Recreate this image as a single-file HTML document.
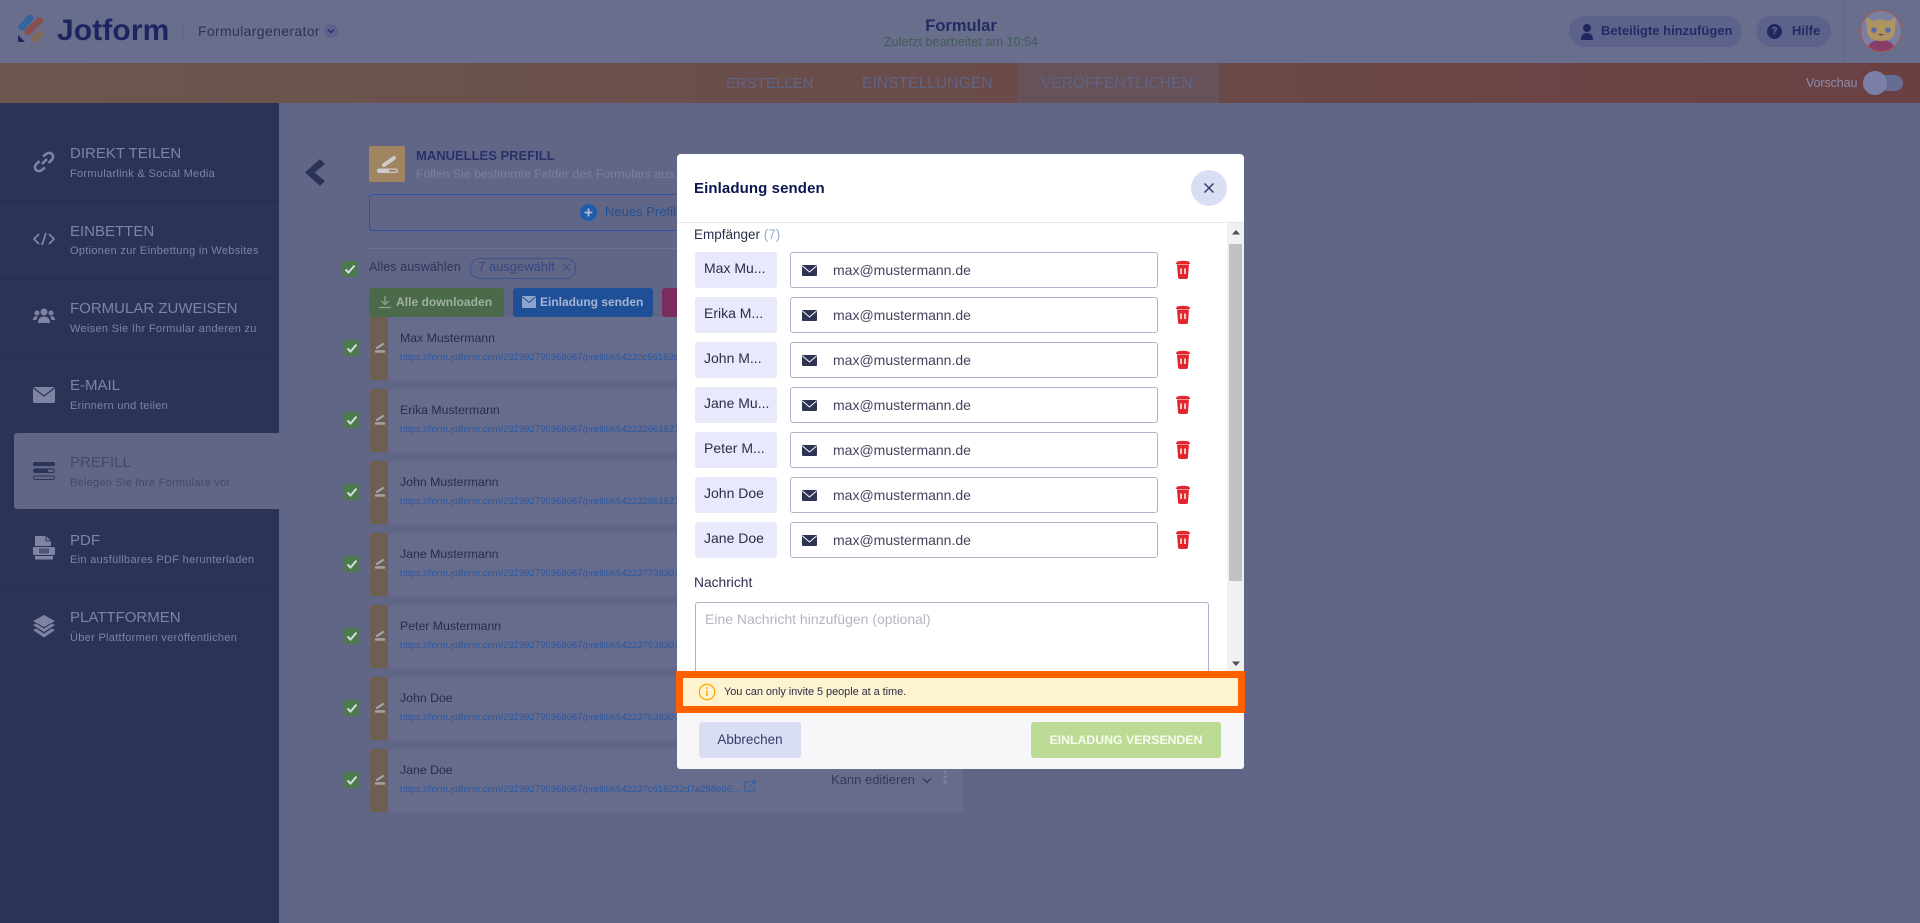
<!DOCTYPE html>
<html lang="de"><head><meta charset="utf-8"><title>Formular</title>
<style>
html,body{margin:0;padding:0}
body{width:1920px;height:923px;overflow:hidden;position:relative;background:#626686;font-family:"Liberation Sans",sans-serif}
div,span.a,svg{position:absolute}
.t{position:absolute;white-space:nowrap;line-height:20px;height:20px}
.st{color:#7f84a3;font-size:15px;letter-spacing:0;left:70px}
.ss{color:#7f84a3;font-size:11px;letter-spacing:.3px;left:70px}
.dv{left:0;width:279px;height:1px;background:#262e50}
.row{left:370px;width:593px;height:63px;background:#686c8c;border-radius:2px}
.acc{left:370px;width:18px;height:63px;background:#6f5f52;border-radius:2px}
.cb{left:344px;width:16px;height:16px;background:#4a7a4e;border-radius:3px}
.nm{left:400px;font-size:12.3px;color:#272c4e}
.lk{left:400px;font-size:9.4px;letter-spacing:.08px;color:#2358a8;width:343px;overflow:hidden}
.chip{left:695px;width:82px;height:36px;background:#e8e9fb;border-radius:3px}
.cht{left:704px;font-size:14px;color:#2b2e4a}
.inp{left:790px;width:366px;height:34px;background:#fff;border:1px solid #b3b2ca;border-radius:3px}
.em{left:833px;font-size:14px;color:#45445f}
</style></head><body>

<!-- header -->
<div style="left:0;top:0;width:1920px;height:63px;background:#6a6e8d"></div>
<svg style="left:0;top:0" width="60" height="60" viewBox="0 0 60 60">
<line x1="22" y1="27" x2="30" y2="18" stroke="#33649f" stroke-width="7" stroke-linecap="round"/>
<line x1="27.500" y1="32" x2="39.500" y2="20.500" stroke="#87504f" stroke-width="7" stroke-linecap="round"/>
<line x1="34.500" y1="39" x2="40" y2="34" stroke="#836a56" stroke-width="7" stroke-linecap="round"/>
<path d="M18 35 L25 42 H19 Q18 42 18 41Z" fill="#1c2560"/>
</svg>
<div class="t" style="left:57px;top:14px;font-size:30px;font-weight:700;color:#1c2560;line-height:34px;height:34px;letter-spacing:.1px">Jotform</div>
<div style="left:183px;top:22px;width:1px;height:19px;background:#62668a"></div>
<div class="t" style="left:198px;top:21px;font-size:14px;color:#2c3258;letter-spacing:.35px">Formulargenerator</div>
<div style="left:324px;top:24px;width:14px;height:14px;border-radius:50%;background:#5d628c"></div>
<svg style="left:324px;top:24px" width="14" height="14"><path d="M4 5.500 L7 8.500 L10 5.500" fill="none" stroke="#232b63" stroke-width="1.300"/></svg>
<div class="t" style="left:900px;width:122px;text-align:center;top:16px;font-size:16.5px;font-weight:700;color:#222b63">Formular</div>
<div class="t" style="left:860px;width:202px;text-align:center;top:32px;font-size:12.700px;color:#3f5e58">Zuletzt bearbeitet am 10:54</div>

<div style="left:1569px;top:16px;width:173px;height:31px;border-radius:16px;background:#5d628a"></div>
<svg style="left:1579px;top:23px" width="16" height="18" viewBox="0 0 16 18"><circle cx="8" cy="5" r="4" fill="#1f2860"/><path d="M2 17 Q2 10 8 10 Q14 10 14 17Z" fill="#1f2860"/></svg>
<div class="t" style="left:1601px;top:21px;font-size:13px;font-weight:700;color:#232b63">Beteiligte hinzufügen</div>
<div style="left:1756px;top:16px;width:75px;height:31px;border-radius:16px;background:#5d628a"></div>
<div style="left:1767px;top:24px;width:15px;height:15px;border-radius:50%;background:#1f2860"></div>
<div class="t" style="left:1767px;width:15px;text-align:center;top:21.500px;font-size:10px;font-weight:700;color:#6a6e8d">?</div>
<div class="t" style="left:1792px;top:21px;font-size:13px;font-weight:700;color:#232b63">Hilfe</div>
<div style="left:1844px;top:0;width:1px;height:63px;background:#62668a"></div>
<svg style="left:1858px;top:8px" width="46" height="46" viewBox="0 0 46 46">
<defs><clipPath id="av"><circle cx="23" cy="23" r="20.500"/></clipPath></defs>
<circle cx="23" cy="23" r="20.500" fill="#7b80a3"/>
<g clip-path="url(#av)">
<path d="M8 46 Q9 32 23 32 Q37 32 38 46Z" fill="#8b3d69"/>
<path d="M8 9 L15 13 Q23 10 31 13 L38 9 L37 20 Q38 33 23 33 Q8 33 9 20Z" fill="#ad9460"/>
<circle cx="16" cy="22" r="2.800" fill="#5a6ca3"/><circle cx="30" cy="22" r="2.800" fill="#5a6ca3"/>
<path d="M20 26 Q23 29 26 26" fill="#6b3a4f"/>
</g>
<circle cx="23" cy="23" r="20.500" fill="none" stroke="#a4584f" stroke-width="1"/>
</svg>

<!-- nav band -->
<div style="left:0;top:63px;width:1920px;height:40px;background:linear-gradient(90deg,#6b5750,#6a4043)"></div>
<div style="left:1017px;top:63px;width:202px;height:40px;background:#665258"></div>
<div class="t" style="left:726px;top:74px;font-size:15px;color:#5f6486;letter-spacing:0">ERSTELLEN</div>
<div class="t" style="left:862px;top:74px;font-size:15.500px;color:#5f6486;letter-spacing:.1px">EINSTELLUNGEN</div>
<div class="t" style="left:1041px;top:74px;font-size:15.500px;color:#5f6486;letter-spacing:.05px">VERÖFFENTLICHEN</div>
<div class="t" style="left:1806px;top:73px;font-size:12.500px;color:#8a8cac;letter-spacing:-.1px">Vorschau</div>
<div style="left:1863px;top:75px;width:40px;height:16px;border-radius:8px;background:#666c92"></div>
<div style="left:1863px;top:71px;width:24px;height:24px;border-radius:50%;background:#7c80a8"></div>

<!-- sidebar -->
<div style="left:0;top:103px;width:279px;height:820px;background:#2b3357"></div>
<div style="left:14px;top:433px;width:265px;height:76px;background:#626686;border-radius:3px 0 0 3px"></div>
<div class="dv" style="top:200px"></div><div class="dv" style="top:278px"></div><div class="dv" style="top:355px"></div><div class="dv" style="top:587px"></div>

<div class="t st" style="top:144px">DIREKT TEILEN</div><div class="t ss" style="top:164px">Formularlink &amp; Social Media</div>
<div class="t st" style="top:222px">EINBETTEN</div><div class="t ss" style="top:241px">Optionen zur Einbettung in Websites</div>
<div class="t st" style="top:299px">FORMULAR ZUWEISEN</div><div class="t ss" style="top:319px">Weisen Sie Ihr Formular anderen zu</div>
<div class="t st" style="top:376px">E-MAIL</div><div class="t ss" style="top:396px">Erinnern und teilen</div>
<div class="t st" style="top:453px;color:#434868">PREFILL</div><div class="t ss" style="top:473px;color:#434868;letter-spacing:.25px">Belegen Sie Ihre Formulare vor</div>
<div class="t st" style="top:531px">PDF</div><div class="t ss" style="top:550px">Ein ausfüllbares PDF herunterladen</div>
<div class="t st" style="top:608px">PLATTFORMEN</div><div class="t ss" style="top:628px">Über Plattformen veröffentlichen</div>

<svg style="left:33px;top:151px" width="22" height="22" viewBox="0 0 22 22" fill="none" stroke="#7f84a3" stroke-width="2.500"><path d="M9 13 L14 8"/><path d="M10 5.500 L13.500 2.800 Q16.500 0.800 19 3 Q21.200 5.500 19 8.500 L15.500 12"/><path d="M12 16.500 L8.500 19.200 Q5.500 21.200 3 19 Q0.800 16.500 3 13.500 L6.500 10"/></svg>
<svg style="left:33px;top:232px" width="22" height="14" viewBox="0 0 22 14" fill="none" stroke="#7f84a3" stroke-width="1.800"><path d="M6 2 L1 7 L6 12"/><path d="M16 2 L21 7 L16 12"/><path d="M13 1 L9 13"/></svg>
<svg style="left:33px;top:308px" width="22" height="16" viewBox="0 0 22 16" fill="#7f84a3"><circle cx="11" cy="4" r="3.500"/><circle cx="4" cy="5" r="2.500"/><circle cx="18" cy="5" r="2.500"/><path d="M5 15 Q5 8.500 11 8.500 Q17 8.500 17 15Z"/><path d="M0 12 Q0 8 4 8 L5 8 Q3.500 10 3.500 12Z"/><path d="M22 12 Q22 8 18 8 L17 8 Q18.500 10 18.500 12Z"/></svg>
<svg style="left:33px;top:387px" width="22" height="16" viewBox="0 0 22 16"><rect width="22" height="16" rx="1.500" fill="#7f84a3"/><path d="M0.500 1 L11 9 L21.500 1" fill="none" stroke="#2b3357" stroke-width="1.200"/></svg>
<svg style="left:33px;top:461px" width="22" height="20" viewBox="0 0 22 20"><rect x="0" y="1" width="22" height="4" rx="2" fill="#2b3357"/><rect x="0.500" y="8" width="21" height="3.500" rx="1.700" fill="none" stroke="#2b3357"/><rect x="1" y="8.500" width="14" height="3" fill="#2b3357"/><rect x="0.500" y="15" width="21" height="3.500" rx="1.700" fill="none" stroke="#2b3357"/></svg>
<svg style="left:33px;top:536px" width="22" height="24" viewBox="0 0 22 24"><path d="M2 0 H13 L18 5 V10 H2Z" fill="#7f84a3"/><path d="M13 0 V5 H18" fill="none" stroke="#2b3357"/><rect x="0" y="11" width="22" height="8" rx="1" fill="#7f84a3"/><rect x="2" y="20" width="18" height="3.500" fill="#7f84a3"/><rect x="6" y="12.500" width="10" height="5" fill="#2b3357" opacity=".6"/></svg>
<svg style="left:33px;top:615px" width="22" height="23" viewBox="0 0 22 23" fill="#7f84a3"><path d="M11 0 L22 6 L11 12 L0 6Z"/><path d="M0 10 L3 8.500 L11 13.500 L19 8.500 L22 10 L11 17Z"/><path d="M0 15 L3 13.500 L11 18.500 L19 13.500 L22 15 L11 22.500Z"/></svg>

<!-- back chevron -->
<svg style="left:304px;top:158px" width="22" height="29" viewBox="0 0 22 29"><path d="M16 1 L21 6 L10.500 14.500 L21 23 L16 28 L1 14.500Z" fill="#2b3357"/></svg>

<!-- manual prefill -->
<div style="left:369px;top:146px;width:36px;height:36px;background:#a08660;border-radius:2px"></div>
<svg style="left:369px;top:146px" width="36" height="36" viewBox="0 0 36 36"><line x1="15" y1="19" x2="25" y2="12" stroke="#cfcad0" stroke-width="4" stroke-linecap="round"/><rect x="8" y="22.500" width="21" height="4.500" rx="2.200" fill="#cfcad0"/><rect x="20" y="23.700" width="7.500" height="2" fill="#a08660"/></svg>
<div class="t" style="left:416px;top:146px;font-size:13px;font-weight:700;color:#2a3168">MANUELLES PREFILL</div>
<div class="t" style="left:416px;top:164px;font-size:12.300px;color:#7c80a0">Füllen Sie bestimmte Felder des Formulars aus,</div>
<div style="left:369px;top:194px;width:600px;height:35px;border:1px solid #2a55a0;border-radius:4px"></div>
<div style="left:580px;top:204px;width:17px;height:17px;border-radius:50%;background:#1e5cac"></div>
<svg style="left:580px;top:204px" width="17" height="17"><path d="M8.500 4.500 V12.500 M4.500 8.500 H12.500" stroke="#b4bfd6" stroke-width="1.800"/></svg>
<div class="t" style="left:605px;top:202px;font-size:13px;color:#24508f">Neues Prefill</div>
<div style="left:369px;top:248px;width:600px;height:1px;background:#6f7391"></div>

<div class="cb" style="left:342px;top:261px"></div>
<svg style="left:342px;top:261px" width="16" height="16"><path d="M3.500 8.500 L6.500 11.500 L12.500 4.500" fill="none" stroke="#d5dbe0" stroke-width="2"/></svg>
<div class="t" style="left:369px;top:257px;font-size:12.500px;color:#2e3358;letter-spacing:.1px">Alles auswählen</div>
<div style="left:470px;top:258px;width:104px;height:19px;border:1px solid #3d5490;border-radius:10px"></div>
<div class="t" style="left:478px;top:257px;font-size:13px;color:#364785">7 ausgewählt</div>
<svg style="left:562px;top:263px" width="9" height="9"><path d="M1 1 L8 8 M8 1 L1 8" stroke="#404f8a" stroke-width="1"/></svg>

<div style="left:369px;top:288px;width:135px;height:29px;background:#4b6a4a;border-radius:3px"></div>
<svg style="left:378px;top:295px" width="14" height="14" fill="none" stroke="#8ea08f" stroke-width="1.300"><path d="M7 1 V9 M3.500 6 L7 9.500 L10.500 6 M1 12.500 H13"/></svg>
<div class="t" style="left:396px;top:292px;font-size:12.100px;font-weight:700;color:#9fb0a0">Alle downloaden</div>
<div style="left:513px;top:288px;width:140px;height:29px;background:#1f4f96;border-radius:3px"></div>
<svg style="left:522px;top:296px" width="14" height="12"><rect width="14" height="12" rx="1" fill="#8ea6cc"/><path d="M0.500 1 L7 6.500 L13.500 1" fill="none" stroke="#1f4f96"/></svg>
<div class="t" style="left:540px;top:292px;font-size:12px;font-weight:700;color:#a4b5d3">Einladung senden</div>
<div style="left:662px;top:288px;width:40px;height:29px;background:#7a2d5c;border-radius:3px"></div>

<!-- rows -->
<div class="row" style="top:317px"></div><div class="acc" style="top:317px"></div><div class="cb" style="top:340px"></div>
<div class="row" style="top:389px"></div><div class="acc" style="top:389px"></div><div class="cb" style="top:412px"></div>
<div class="row" style="top:461px"></div><div class="acc" style="top:461px"></div><div class="cb" style="top:484px"></div>
<div class="row" style="top:533px"></div><div class="acc" style="top:533px"></div><div class="cb" style="top:556px"></div>
<div class="row" style="top:605px"></div><div class="acc" style="top:605px"></div><div class="cb" style="top:628px"></div>
<div class="row" style="top:677px"></div><div class="acc" style="top:677px"></div><div class="cb" style="top:700px"></div>
<div class="row" style="top:749px"></div><div class="acc" style="top:749px"></div><div class="cb" style="top:772px"></div>
<svg style="left:344px;top:317px" width="44" height="500" viewBox="0 0 44 500" fill="none">
<g id="r"><path d="M3.500 31.500 L6.500 34.500 L12.500 27.500" stroke="#d5dbe0" stroke-width="2"/><line x1="33" y1="31" x2="39" y2="27" stroke="#a6a2a6" stroke-width="2.200" stroke-linecap="round"/><line x1="32" y1="34.500" x2="40" y2="34.500" stroke="#a6a2a6" stroke-width="2.500" stroke-linecap="round"/></g>
<use href="#r" y="72"/><use href="#r" y="144"/><use href="#r" y="216"/><use href="#r" y="288"/><use href="#r" y="360"/><use href="#r" y="432"/>
</svg>
<div class="t nm" style="top:328px">Max Mustermann</div><div class="t lk" style="top:347px">https://form.jotform.com/232992790368067/prefill/654220c56162d7a298e66...</div>
<div class="t nm" style="top:400px">Erika Mustermann</div><div class="t lk" style="top:419px">https://form.jotform.com/232992790368067/prefill/6542232661627a298e66...</div>
<div class="t nm" style="top:472px">John Mustermann</div><div class="t lk" style="top:491px">https://form.jotform.com/232992790368067/prefill/6542232861627a298e66...</div>
<div class="t nm" style="top:544px">Jane Mustermann</div><div class="t lk" style="top:563px">https://form.jotform.com/232992790368067/prefill/6542237739307a298e66...</div>
<div class="t nm" style="top:616px">Peter Mustermann</div><div class="t lk" style="top:635px">https://form.jotform.com/232992790368067/prefill/6542237939307a298e66...</div>
<div class="t nm" style="top:688px">John Doe</div><div class="t lk" style="top:707px">https://form.jotform.com/232992790368067/prefill/6542237b39307a298e66...</div>
<div class="t nm" style="top:760px">Jane Doe</div><div class="t lk" style="top:779px">https://form.jotform.com/232992790368067/prefill/6542237c616232d7a298e66...</div>
<svg style="left:744px;top:780px" width="12" height="12" fill="none" stroke="#2b5ea8" stroke-width="1.100"><path d="M6 2 H1 V11 H10 V7"/><path d="M5 7 L11 1 M7.500 1 H11 V4.500"/></svg>
<div class="t" style="left:831px;top:770px;font-size:13px;color:#34395c">Kann editieren</div>
<svg style="left:922px;top:777px" width="10" height="8"><path d="M1 1.500 L5 5.500 L9 1.500" fill="none" stroke="#34395c" stroke-width="1.400"/></svg>
<svg style="left:942px;top:769px" width="6" height="16" fill="#7c80a0"><circle cx="3" cy="3" r="1.700"/><circle cx="3" cy="8" r="1.700"/><circle cx="3" cy="13" r="1.700"/></svg>

<!-- modal -->
<div style="left:677px;top:154px;width:567px;height:615px;background:#fff;border-radius:4px;overflow:hidden"></div>
<div class="t" style="left:694px;top:179px;font-size:15px;font-weight:700;color:#0a1551;letter-spacing:.1px">Einladung senden</div>
<div style="left:1191px;top:170px;width:36px;height:36px;border-radius:50%;background:#dadef3"></div>
<svg style="left:1191px;top:170px" width="36" height="36"><path d="M13.500 13.500 L22.500 22.500 M22.500 13.500 L13.500 22.500" stroke="#343c6a" stroke-width="1.500"/></svg>
<div style="left:677px;top:222px;width:567px;height:1px;background:#e6e6f0"></div>

<div style="left:1227px;top:223px;width:17px;height:448px;background:#f1f1f1"></div>
<div style="left:1229px;top:244px;width:13px;height:337px;background:#c1c1c1"></div>
<svg style="left:1231px;top:229px" width="10" height="6"><path d="M1 5.500 L5 1 L9 5.500Z" fill="#505050"/></svg>
<svg style="left:1231px;top:661px" width="10" height="6"><path d="M1 .5 L5 5 L9 .5Z" fill="#505050"/></svg>

<div class="t" style="left:694px;top:225px;font-size:13.500px;color:#2b2e4a">Empfänger <span style="color:#8fb0d8">(7)</span></div>

<div class="chip" style="top:252px"></div><div class="t cht" style="top:258px">Max Mu...</div><div class="inp" style="top:252px"></div><div class="t em" style="top:260px">max@mustermann.de</div>
<div class="chip" style="top:297px"></div><div class="t cht" style="top:303px">Erika M...</div><div class="inp" style="top:297px"></div><div class="t em" style="top:305px">max@mustermann.de</div>
<div class="chip" style="top:342px"></div><div class="t cht" style="top:348px">John M...</div><div class="inp" style="top:342px"></div><div class="t em" style="top:350px">max@mustermann.de</div>
<div class="chip" style="top:387px"></div><div class="t cht" style="top:393px">Jane Mu...</div><div class="inp" style="top:387px"></div><div class="t em" style="top:395px">max@mustermann.de</div>
<div class="chip" style="top:432px"></div><div class="t cht" style="top:438px">Peter M...</div><div class="inp" style="top:432px"></div><div class="t em" style="top:440px">max@mustermann.de</div>
<div class="chip" style="top:477px"></div><div class="t cht" style="top:483px">John Doe</div><div class="inp" style="top:477px"></div><div class="t em" style="top:485px">max@mustermann.de</div>
<div class="chip" style="top:522px"></div><div class="t cht" style="top:528px">Jane Doe</div><div class="inp" style="top:522px"></div><div class="t em" style="top:530px">max@mustermann.de</div>

<svg style="left:802px;top:252px" width="388" height="306" viewBox="0 0 388 306">
<g id="a"><rect x="0" y="13" width="15" height="11" rx="1" fill="#2f3354"/><path d="M0.500 14 L7.500 20 L14.500 14" fill="none" stroke="#fff" stroke-width="1"/>
<path d="M374 10.500 H388 V12 H374Z" fill="#e3262d"/><path d="M375 9.500 Q381 8 387 9.500 L387 11 H375Z" fill="#e3262d"/><path d="M375 12.500 H387 L386 25 Q386 27 384 27 H378 Q376 27 376 25Z" fill="#e3262d"/><path d="M379 16.500 V22 M383 16.500 V22" stroke="#fff" stroke-width="1.500"/></g>
<use href="#a" y="45"/><use href="#a" y="90"/><use href="#a" y="135"/><use href="#a" y="180"/><use href="#a" y="225"/><use href="#a" y="270"/>
</svg>

<div class="t" style="left:694px;top:573px;font-size:13.800px;color:#2b2e4a">Nachricht</div>
<div style="left:695px;top:602px;width:512px;height:69px;border:1px solid #b3b2ca;border-bottom:0;border-radius:3px 3px 0 0"></div>
<div class="t" style="left:705px;top:609px;font-size:14px;color:#b4b4c6">Eine Nachricht hinzufügen (optional)</div>

<div style="left:677px;top:713px;width:567px;height:56px;background:#f7f7fa;border-radius:0 0 3px 3px"></div>
<div style="left:676px;top:671px;width:569px;height:42px;background:#ff6100"></div>
<div style="left:683px;top:678px;width:555px;height:28px;background:#fef3d0"></div>
<svg style="left:698px;top:683px" width="18" height="18" viewBox="0 0 18 18" fill="none" stroke="#ffa800"><circle cx="9" cy="9" r="7.700" stroke-width="1.300"/><path d="M9 7.500 V13" stroke-width="1.500"/><circle cx="9" cy="5" r=".9" fill="#ffa800" stroke="none"/></svg>
<div class="t" style="left:724px;top:682px;font-size:11px;color:#2b2e4a;letter-spacing:-.07px">You can only invite 5 people at a time.</div>
<div style="left:699px;top:722px;width:102px;height:36px;background:#dadef3;border-radius:3px"></div>
<div class="t" style="left:699px;width:102px;text-align:center;top:730px;font-size:13.500px;color:#343c6a">Abbrechen</div>
<div style="left:1031px;top:722px;width:190px;height:36px;background:#bcdc95;border-radius:3px"></div>
<div class="t" style="left:1031px;width:190px;text-align:center;top:730px;font-size:12.300px;font-weight:700;color:#f7fbf0">EINLADUNG VERSENDEN</div>

</body></html>
